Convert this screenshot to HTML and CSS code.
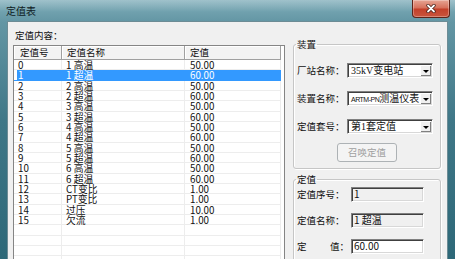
FILE: index.html
```html
<!DOCTYPE html>
<html lang="zh-CN">
<head>
    <meta charset="UTF-8">
    <title>定值表</title>
    <link rel="stylesheet" href="styles.css">
</head>
<body>
    <div class="window">
        <div class="titlebar">
            <span class="title">定值表</span>
            <div class="close">
                <svg width="10" height="9" viewBox="0 0 10 9">
                    <path d="M2 1.5 L8 7.5 M8 1.5 L2 7.5" stroke="#3b1710" stroke-width="3.2" stroke-linecap="round"/>
                    <path d="M2 1.5 L8 7.5 M8 1.5 L2 7.5" stroke="#fff" stroke-width="1.8" stroke-linecap="round"/>
                </svg>
            </div>
        </div>
        <div class="client">
            <div class="left">
                <div class="caption">定值内容：</div>
                <div class="listview">
                    <div class="lv-head">
                        <div class="c1">定值号</div>
                        <div class="c2">定值名称</div>
                        <div class="c3">定值</div>
                    </div>
                    <div class="lv-row"><div class="c1">0</div><div class="c2">1 高温</div><div class="c3">50.00</div></div>
                    <div class="lv-row sel"><div class="c1">1</div><div class="c2">1 超温</div><div class="c3">60.00</div></div>
                    <div class="lv-row"><div class="c1">2</div><div class="c2">2 高温</div><div class="c3">50.00</div></div>
                    <div class="lv-row"><div class="c1">3</div><div class="c2">2 超温</div><div class="c3">60.00</div></div>
                    <div class="lv-row"><div class="c1">4</div><div class="c2">3 高温</div><div class="c3">50.00</div></div>
                    <div class="lv-row"><div class="c1">5</div><div class="c2">3 超温</div><div class="c3">60.00</div></div>
                    <div class="lv-row"><div class="c1">6</div><div class="c2">4 高温</div><div class="c3">50.00</div></div>
                    <div class="lv-row"><div class="c1">7</div><div class="c2">4 超温</div><div class="c3">60.00</div></div>
                    <div class="lv-row"><div class="c1">8</div><div class="c2">5 高温</div><div class="c3">50.00</div></div>
                    <div class="lv-row"><div class="c1">9</div><div class="c2">5 超温</div><div class="c3">60.00</div></div>
                    <div class="lv-row"><div class="c1">10</div><div class="c2">6 高温</div><div class="c3">50.00</div></div>
                    <div class="lv-row"><div class="c1">11</div><div class="c2">6 超温</div><div class="c3">60.00</div></div>
                    <div class="lv-row"><div class="c1">12</div><div class="c2">CT变比</div><div class="c3">1.00</div></div>
                    <div class="lv-row"><div class="c1">13</div><div class="c2">PT变比</div><div class="c3">1.00</div></div>
                    <div class="lv-row"><div class="c1">14</div><div class="c2">过压</div><div class="c3">10.00</div></div>
                    <div class="lv-row"><div class="c1">15</div><div class="c2">欠流</div><div class="c3">1.00</div></div>
                    <div class="lv-row"><div class="c1"></div><div class="c2"></div><div class="c3"></div></div>
                    <div class="lv-row"><div class="c1"></div><div class="c2"></div><div class="c3"></div></div>
                    <div class="lv-row"><div class="c1"></div><div class="c2"></div><div class="c3"></div></div>
                    <div class="lv-row"><div class="c1"></div><div class="c2"></div><div class="c3"></div></div>
                </div>
            </div>
            <div class="right">
                <fieldset class="group device">
                    <legend>装置</legend>
                    <div class="field">
                        <label>厂站名称：</label>
                        <div class="combo"><span class="combo-text">35kV变电站</span><span class="combo-btn"></span></div>
                    </div>
                    <div class="field">
                        <label>装置名称：</label>
                        <div class="combo"><span class="combo-text"><span class="narrow">ARTM-PN</span>测温仪表</span><span class="combo-btn"></span></div>
                    </div>
                    <div class="field">
                        <label>定值套号：</label>
                        <div class="combo"><span class="combo-text">第1套定值</span><span class="combo-btn"></span></div>
                    </div>
                    <button class="btn" disabled>召唤定值</button>
                </fieldset>
                <fieldset class="group value">
                    <legend>定值</legend>
                    <div class="field">
                        <label>定值序号：</label>
                        <div class="edit readonly">1</div>
                    </div>
                    <div class="field">
                        <label>定值名称：</label>
                        <div class="edit readonly">1 超温</div>
                    </div>
                    <div class="field">
                        <label class="split"><span>定</span><span>值：</span></label>
                        <div class="edit">60.00</div>
                    </div>
                </fieldset>
            </div>
        </div>
    </div>
</body>
</html>
```

FILE: styles.css
```css
body {
    margin: 0;
    font-family: "Noto Sans CJK SC", sans-serif;
    color: #111;
}
.window {
    width: 455px;
    height: 259px;
    overflow: hidden;
    display: flex;
    flex-direction: column;
    background: linear-gradient(to bottom, #7fadb9 0px, #6396a4 22px, #3f7787 120px, #2d6878 259px);
}
.titlebar {
    height: 21px;
    flex: none;
    display: flex;
    align-items: flex-start;
    background: linear-gradient(to bottom, rgba(255,255,255,0.25), rgba(255,255,255,0) 12px);
}
.title {
    padding-left: 6px;
    font-size: 10px;
    line-height: 21px;
    color: #0e1a1e;
}
.close {
    margin-left: auto;
    margin-right: 5px;
    width: 38px;
    height: 18px;
    box-sizing: border-box;
    border: 1px solid #5e2419;
    border-top: none;
    border-radius: 0 0 4px 4px;
    background: linear-gradient(to bottom, #e6a594 0px, #d6705b 8px, #c3402a 9px, #c9553d 17px);
    box-shadow: inset 0 0 0 1px rgba(255,255,255,0.3);
    display: flex;
    align-items: center;
    justify-content: center;
}
.client {
    flex: 1;
    margin: 0 7px;
    background: #f0f0f0;
    border: 1px solid #6d8c95;
    border-bottom: none;
    display: grid;
    grid-template-columns: 272px 148px;
    column-gap: 8px;
    padding-left: 5px;
    align-items: start;
}
.left {
    padding-top: 6px;
}
.caption {
    font-size: 9.5px;
    line-height: 14px;
    padding-left: 2px;
    margin-bottom: 3px;
}
.listview {
    height: 230px;
    box-sizing: border-box;
    border: 1px solid #858585;
    background: #fff;
    overflow: hidden;
}
.lv-head {
    display: flex;
    height: 14px;
}
.lv-head div {
    box-sizing: border-box;
    height: 14px;
    font-size: 9.5px;
    line-height: 13px;
    background: #f3f3f3;
    border-right: 1px solid #a0a0a0;
    border-bottom: 1px solid #a0a0a0;
    box-shadow: inset 1px 1px #fff;
}
.lv-row {
    display: flex;
    height: 10.33px;
    font-size: 9.8px;
    line-height: 10px;
}
.lv-row div {
    box-sizing: border-box;
    height: 10.33px;
    border-right: 1px solid #ededed;
    border-bottom: 1px solid #ededed;
    white-space: nowrap;
}
.c1 { width: 48px; padding-left: 4px; }
.c2 { width: 123px; padding-left: 4px; }
.c3 { width: 96px; padding-left: 5px; }
.lv-head .c1 { padding-left: 6px; }
.lv-head .c2 { padding-left: 5px; }
.lv-row.sel {
    color: #fff;
}
.lv-row.sel div {
    background: #3399ff;
    border-color: #3399ff;
}
.lv-row.sel .c1 {
    background: linear-gradient(to right, #fff 3px, #3399ff 3px);
}
.right {
    padding-top: 16px;
}
.group {
    margin: 0;
    min-width: 0;
    border: 1px solid #c6c6c6;
    border-radius: 3px;
    box-shadow: inset 1px 1px #fff, 1px 1px #fff;
}
.group legend {
    padding: 0 1px;
    margin-left: -1px;
    font-size: 9.5px;
    line-height: 12px;
}
.device {
    padding: 13px 7px 6px 3px;
}
.value {
    margin-top: 4px;
    padding: 2px 7px 10px 3px;
}
.field {
    display: flex;
    align-items: center;
    height: 15px;
}
.device .field + .field {
    margin-top: 13px;
}
.value .field + .field {
    margin-top: 11px;
}
.field label {
    font-size: 9.5px;
    line-height: 15px;
    white-space: nowrap;
}
.device label {
    width: 50px;
}
.value label {
    width: 54px;
}
.field label.split {
    display: flex;
    justify-content: space-between;
    padding-right: 2px;
    box-sizing: border-box;
}
.combo,
.edit {
    height: 15px;
    box-sizing: border-box;
    border: 1px solid;
    border-color: #808080 #fff #fff #808080;
    box-shadow: inset 1px 1px #404040, inset -1px -1px #d8d8d8;
    background: #fff;
}
.combo {
    width: 86px;
    display: flex;
    padding: 1px;
}
.combo-text {
    flex: 1;
    overflow: hidden;
    white-space: nowrap;
    padding-left: 2px;
    font-family: "Liberation Serif", "Noto Sans CJK SC", serif;
    font-size: 10px;
    line-height: 11px;
}
.narrow {
    font-family: "Liberation Sans", sans-serif;
    font-size: 7px;
    letter-spacing: -0.5px;
}
.combo-btn {
    width: 11px;
    flex: none;
    box-sizing: border-box;
    background: #f0f0f0;
    border-top: 1px solid #fff;
    border-left: 1px solid #fff;
    box-shadow: inset -1px -1px #808080;
    position: relative;
}
.combo-btn::after {
    content: "";
    position: absolute;
    left: 2px;
    top: 4px;
    border-left: 3px solid transparent;
    border-right: 3px solid transparent;
    border-top: 3px solid #000;
}
.edit {
    width: 73px;
    padding-left: 2px;
    font-size: 10px;
    line-height: 12px;
}
.edit.readonly {
    background: #f0f0f0;
}
.btn {
    display: block;
    margin: 9px 0 0 40px;
    width: 60px;
    height: 19px;
    padding: 0;
    border: 1px solid #adb2b5;
    border-radius: 3px;
    background: #f4f4f4;
    color: #a0a0a0;
    font-family: "Noto Sans CJK SC", sans-serif;
    font-size: 9.5px;
    line-height: 17px;
}
```
